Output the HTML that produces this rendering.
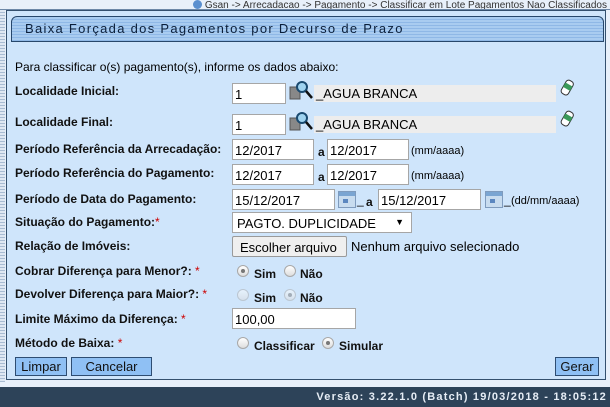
<!DOCTYPE html>
<html><head><meta charset="utf-8"><style>
*{margin:0;padding:0;box-sizing:border-box}
body{width:610px;height:407px;overflow:hidden;background:#e8f0fa;font-family:"Liberation Sans",Arial,sans-serif;font-size:12px;color:#000;position:relative}
.a{position:absolute;white-space:nowrap}
.crumb{top:0;right:3px;font-size:10px;color:#333;}
.topline{position:absolute;left:0;top:9px;width:610px;height:1px;background:#6d88a8}
.lstrip{position:absolute;left:0;top:10px;width:5px;height:372px;background:repeating-linear-gradient(#dfe8f3 0 2px,#a9bcd3 2px 3px)}
.panel{position:absolute;left:6px;top:10px;width:600px;height:370px;background:#cfe5fb;border:1px solid #34506e}
.title{position:absolute;left:11px;top:16px;width:593px;height:26px;background:repeating-linear-gradient(#a9ccf0 0 2px,#8fb8e6 2px 3px);border:1px solid #27476b;border-radius:6px 6px 0 0;font-size:13px;letter-spacing:1.3px;color:#0b1f3a;padding:4px 0 0 13px}
.lbl{font-size:12px;font-weight:bold;color:#111}
.lbl b{color:#c00;font-weight:normal}
.inp{position:absolute;background:#fff;border:1px solid #a6a6a6;height:21px;font-size:13px;padding:3px 2px 0}
.gray{position:absolute;background:#ededed;height:17px;font-size:13px;padding:1px 0 0 2px}
.rad{position:absolute;width:12px;height:12px;border-radius:50%;background:linear-gradient(#fff,#ddd);border:1px solid #a8a8a8}
.rad.on::after{content:"";position:absolute;left:3px;top:3px;width:4px;height:4px;border-radius:50%;background:#777}
.rad.dis{opacity:.5}
.btn{position:absolute;background:#8fc0f4;border:1px solid #2e4d72;height:19px;font-size:13px;color:#111;text-align:center;padding-top:1px}
.footer{position:absolute;left:0;top:387px;width:610px;height:20px;background:#2d4359;color:#e6edf5;font-size:11px;font-weight:bold;letter-spacing:1.2px;text-align:right;padding:4px 3px 0 0}
.cal{position:absolute;width:18px;height:17px;background:linear-gradient(#7aa5d2 0 4px,#c8dcef 4px);border:1px solid #7f9bbd}
.cal::after{content:"";position:absolute;left:4px;top:7px;width:5px;height:4px;background:#5b87c0}
</style></head><body>
<div class="a crumb"><span style="display:inline-block;width:9px;height:9px;border-radius:50%;background:#5a8fcf;vertical-align:-1px;margin-right:3px"></span>Gsan -&gt; Arrecadacao -&gt; Pagamento -&gt; Classificar em Lote Pagamentos Nao Classificados</div>
<div class="topline"></div>
<div class="lstrip"></div>
<div class="panel"></div>
<div class="title">Baixa Forçada dos Pagamentos por Decurso de Prazo</div>

<div class="a" style="left:15px;top:60px;font-size:12px">Para classificar o(s) pagamento(s), informe os dados abaixo:</div>

<div class="a lbl" style="left:15px;top:84px">Localidade Inicial:</div>
<div class="inp" style="left:232px;top:83px;width:54px">1</div>
<svg class="a" style="left:288px;top:79px" width="26" height="24"><rect x="2" y="8" width="10" height="12" fill="#888" stroke="#555"/><circle cx="14" cy="8" r="5" fill="#9fd3f0" stroke="#1a4a70" stroke-width="2"/><line x1="18" y1="12" x2="24" y2="19" stroke="#111" stroke-width="2.5"/></svg>
<div class="gray" style="left:314px;top:85px;width:242px">_AGUA BRANCA</div>
<svg class="a" style="left:559px;top:78px" width="16" height="20"><g transform="rotate(30 8 10)"><rect x="4" y="2" width="8" height="15" rx="3" fill="#fff" stroke="#333"/><rect x="4" y="6" width="8" height="5" fill="#3a9a5a"/></g></svg>

<div class="a lbl" style="left:15px;top:115px">Localidade Final:</div>
<div class="inp" style="left:232px;top:114px;width:54px">1</div>
<svg class="a" style="left:288px;top:110px" width="26" height="24"><rect x="2" y="8" width="10" height="12" fill="#888" stroke="#555"/><circle cx="14" cy="8" r="5" fill="#9fd3f0" stroke="#1a4a70" stroke-width="2"/><line x1="18" y1="12" x2="24" y2="19" stroke="#111" stroke-width="2.5"/></svg>
<div class="gray" style="left:314px;top:116px;width:242px">_AGUA BRANCA</div>
<svg class="a" style="left:559px;top:109px" width="16" height="20"><g transform="rotate(30 8 10)"><rect x="4" y="2" width="8" height="15" rx="3" fill="#fff" stroke="#333"/><rect x="4" y="6" width="8" height="5" fill="#3a9a5a"/></g></svg>

<div class="a lbl" style="left:15px;top:142px">Período Referência da Arrecadação:</div>
<div class="inp" style="left:232px;top:139px;width:82px">12/2017</div>
<div class="a lbl" style="left:318px;top:145px">a</div>
<div class="inp" style="left:327px;top:139px;width:82px">12/2017</div>
<div class="a" style="left:411px;top:145px;font-size:11px">(mm/aaaa)</div>

<div class="a lbl" style="left:15px;top:166px">Período Referência do Pagamento:</div>
<div class="inp" style="left:232px;top:164px;width:82px">12/2017</div>
<div class="a lbl" style="left:318px;top:170px">a</div>
<div class="inp" style="left:327px;top:164px;width:82px">12/2017</div>
<div class="a" style="left:411px;top:170px;font-size:11px">(mm/aaaa)</div>

<div class="a lbl" style="left:15px;top:192px">Período de Data do Pagamento:</div>
<div class="inp" style="left:232px;top:189px;width:103px">15/12/2017</div>
<div class="cal" style="left:338px;top:191px"></div><div class="a" style="left:357px;top:193px">_</div>
<div class="a lbl" style="left:366px;top:195px">a</div>
<div class="inp" style="left:378px;top:189px;width:103px">15/12/2017</div>
<div class="cal" style="left:485px;top:191px"></div><div class="a" style="left:504px;top:193px">_</div>
<div class="a" style="left:511px;top:195px;font-size:11px">(dd/mm/aaaa)</div>

<div class="a lbl" style="left:15px;top:215px">Situação do Pagamento:<b>*</b></div>
<div class="inp" style="left:232px;top:212px;width:180px;padding-left:4px">PAGTO. DUPLICIDADE<span style="position:absolute;right:7px;top:4px;font-size:9px">▼</span></div>

<div class="a lbl" style="left:15px;top:239px">Relação de Imóveis:</div>
<div class="a" style="left:232px;top:236px;width:115px;height:21px;background:#efefef;border:1px solid #9a9a9a;border-radius:2px;font-size:13px;padding:3px 0 0 7px">Escolher arquivo</div>
<div class="a" style="left:351px;top:239px;font-size:13px">Nenhum arquivo selecionado</div>

<div class="a lbl" style="left:15px;top:264px">Cobrar Diferença para Menor?: <b>*</b></div>
<div class="rad on" style="left:237px;top:265px"></div><div class="a lbl" style="left:254px;top:267px">Sim</div>
<div class="rad" style="left:284px;top:265px"></div><div class="a lbl" style="left:300px;top:267px">Não</div>

<div class="a lbl" style="left:15px;top:287px">Devolver Diferença para Maior?: <b>*</b></div>
<div class="rad dis" style="left:237px;top:289px"></div><div class="a lbl" style="left:254px;top:291px">Sim</div>
<div class="rad on dis" style="left:284px;top:289px"></div><div class="a lbl" style="left:300px;top:291px">Não</div>

<div class="a lbl" style="left:15px;top:312px">Limite Máximo da Diferença: <b>*</b></div>
<div class="inp" style="left:232px;top:308px;width:124px">100,00</div>

<div class="a lbl" style="left:15px;top:336px">Método de Baixa: <b>*</b></div>
<div class="rad" style="left:237px;top:337px"></div><div class="a lbl" style="left:254px;top:339px">Classificar</div>
<div class="rad on" style="left:322px;top:337px"></div><div class="a lbl" style="left:339px;top:339px">Simular</div>

<div class="btn" style="left:15px;top:357px;width:52px">Limpar</div>
<div class="btn" style="left:71px;top:357px;width:81px">Cancelar</div>
<div class="btn" style="left:555px;top:357px;width:44px">Gerar</div>

<div class="footer">Versão: 3.22.1.0 (Batch) 19/03/2018 - 18:05:12</div>
</body></html>
